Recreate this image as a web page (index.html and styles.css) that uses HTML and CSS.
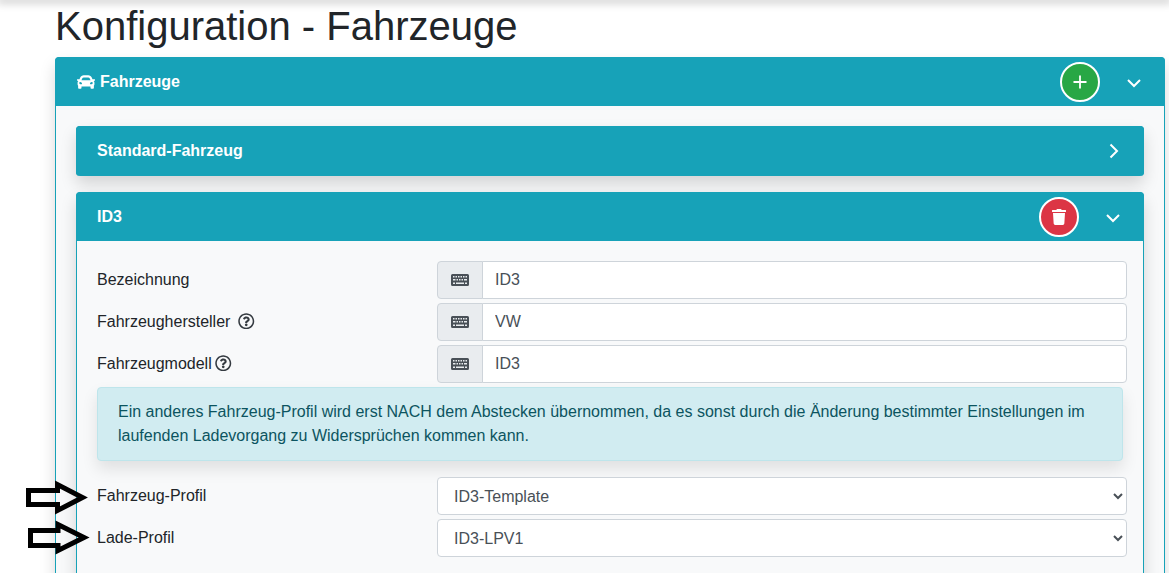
FILE: index.html
```html
<!DOCTYPE html>
<html lang="de">
<head>
<meta charset="utf-8">
<title>Konfiguration - Fahrzeuge</title>
<link rel="stylesheet" href="styles.css">
</head>
<body>
<div class="topshadow"></div>
<main class="page">
  <h1 class="title">Konfiguration - Fahrzeuge</h1>
  <section class="card outer">
    <header class="card-head">
      <div class="head-title">
        <svg class="car" viewBox="0 0 512 512"><path fill="currentColor" d="M499.99 176h-59.87l-16.64-41.6C406.38 91.63 365.57 64 319.5 64h-127c-46.06 0-86.88 27.63-103.99 70.4L71.87 176H12.01C4.2 176-1.53 183.34.37 190.91l6 24C7.7 220.25 12.5 224 18.01 224h20.07C24.65 235.73 16 252.78 16 272v48c0 16.12 6.16 30.67 16 41.93V416c0 17.67 14.33 32 32 32h32c17.67 0 32-14.33 32-32v-32h256v32c0 17.67 14.33 32 32 32h32c17.67 0 32-14.33 32-32v-54.07c9.84-11.25 16-25.8 16-41.93v-48c0-19.22-8.65-36.27-22.07-48H494c5.51 0 10.31-3.75 11.64-9.09l6-24c1.89-7.57-3.84-14.91-11.65-14.91zm-352.06-17.83c7.29-18.22 24.94-30.17 44.57-30.17h127c19.63 0 37.28 11.95 44.57 30.17L384 208H128l19.93-49.83zM96 319.8c-19.2 0-32-12.76-32-31.9S76.8 256 96 256s48 28.71 48 47.85-28.8 15.95-48 15.95zm320 0c-19.2 0-48 3.19-48-15.95S396.8 256 416 256s32 12.76 32 31.9-12.8 31.9-32 31.9z"/></svg>
        <span>Fahrzeuge</span>
      </div>
      <div class="head-actions">
        <span class="round green">
          <svg class="plus" viewBox="0 0 14 14"><path d="M7 .5v13M.5 7h13"/></svg>
        </span>
        <svg class="chev" viewBox="0 0 14 9"><path d="M1 1l6 6 6-6"/></svg>
      </div>
    </header>
    <div class="outer-body">
      <section class="card inner collapsed">
        <header class="card-head head-sub">
          <div class="head-title">Standard-Fahrzeug</div>
          <svg class="chev-right" viewBox="0 0 10 16"><path d="M1.500 1.500 8 8l-6.500 6.500"/></svg>
        </header>
      </section>
      <section class="card inner">
        <header class="card-head head-sub">
          <div class="head-title">ID3</div>
          <div class="head-actions">
            <span class="round red">
              <svg class="trash" viewBox="0 0 448 512"><path fill="currentColor" d="M432 32H312l-9.400-18.700A24 24 0 0 0 281.100 0H166.800a23.720 23.720 0 0 0-21.400 13.300L136 32H16A16 16 0 0 0 0 48v32a16 16 0 0 0 16 16h416a16 16 0 0 0 16-16V48a16 16 0 0 0-16-16zM53.200 467a48 48 0 0 0 47.900 45h245.800a48 48 0 0 0 47.900-45L416 128H32z"/></svg>
            </span>
            <svg class="chev" viewBox="0 0 14 9"><path d="M1 1l6 6 6-6"/></svg>
          </div>
        </header>
        <div class="inner-body">
          <div class="row">
            <label class="lbl">Bezeichnung</label>
            <div class="group">
              <span class="addon"><svg class="kbd" viewBox="0 0 18 12"><use href="#kbd"/></svg></span>
              <input class="field" type="text" value="ID3">
            </div>
          </div>
          <div class="row">
            <label class="lbl">Fahrzeughersteller <svg class="help" viewBox="0 0 512 512"><use href="#help"/></svg></label>
            <div class="group">
              <span class="addon"><svg class="kbd" viewBox="0 0 18 12"><use href="#kbd"/></svg></span>
              <input class="field" type="text" value="VW">
            </div>
          </div>
          <div class="row">
            <label class="lbl">Fahrzeugmodell<svg class="help" viewBox="0 0 512 512"><use href="#help"/></svg></label>
            <div class="group">
              <span class="addon"><svg class="kbd" viewBox="0 0 18 12"><use href="#kbd"/></svg></span>
              <input class="field" type="text" value="ID3">
            </div>
          </div>
          <div class="alert">Ein anderes Fahrzeug-Profil wird erst NACH dem Abstecken übernommen, da es sonst durch die Änderung bestimmter Einstellungen im laufenden Ladevorgang zu Widersprüchen kommen kann.</div>
          <div class="row">
            <label class="lbl">Fahrzeug-Profil</label>
            <select class="field pick"><option>ID3-Template</option></select>
          </div>
          <div class="row">
            <label class="lbl">Lade-Profil</label>
            <select class="field pick"><option>ID3-LPV1</option></select>
          </div>
        </div>
      </section>
    </div>
  </section>
  <svg class="arrow arrow-one" viewBox="0 0 64 36"><path d="M2.500 10.500H31.500V4.500L56.500 17.500 31.500 30.500V24.500H2.500z"/></svg>
  <svg class="arrow arrow-two" viewBox="0 0 64 36"><path d="M2.500 10.500H30V4.500L56 17.500 30 30.500V25.500H2.500z"/></svg>
</main>
<svg class="defs" width="0" height="0">
  <defs>
    <g id="kbd">
      <path fill="#495057" fill-rule="evenodd" d="M1.500 0h15A1.500 1.500 0 0 1 18 1.500v9a1.500 1.500 0 0 1-1.500 1.500h-15A1.500 1.500 0 0 1 0 10.500v-9A1.500 1.500 0 0 1 1.500 0zM2 2v1.500h1.500V2zm2.500 0v1.500H6V2zM7 2v1.500h1.500V2zm2.500 0v1.500H11V2zM12 2v1.500h1.500V2zm2.500 0v1.500H16V2zM2 5v1.500h2.500V5zm3.500 0v1.500H7V5zM8 5v1.500h1.500V5zm2.500 0v1.500H12V5zM13 5v1.500h3V5zM2 8.500V10h2V8.500zm3 0V10h8V8.500zm9 0V10h2V8.500z"/>
    </g>
    <g id="help">
      <path fill="#343a40" d="M256 8C119.043 8 8 119.083 8 256c0 136.997 111.043 248 248 248s248-111.003 248-248C504 119.083 392.957 8 256 8zm0 448c-110.532 0-200-89.431-200-200 0-110.495 89.472-200 200-200 110.491 0 200 89.471 200 200 0 110.530-89.431 200-200 200zm107.244-255.200c0 67.052-72.421 68.084-72.421 92.863V300c0 6.627-5.373 12-12 12h-45.647c-6.627 0-12-5.373-12-12v-8.659c0-35.745 27.100-50.034 47.579-61.516 17.561-9.845 28.324-16.541 28.324-29.579 0-17.246-21.999-28.693-39.784-28.693-23.189 0-33.894 10.977-48.942 29.969-4.057 5.120-11.460 6.071-16.666 2.124l-27.824-21.098c-5.107-3.872-6.251-11.066-2.644-16.363C184.846 131.491 214.940 112 261.794 112c49.071 0 101.450 38.304 101.450 88.800zM298 368c0 23.159-18.841 42-42 42s-42-18.841-42-42 18.841-42 42-42 42 18.841 42 42z"/>
    </g>
  </defs>
</svg>
</body>
</html>
```
FILE: styles.css
```css
* { box-sizing: border-box; }
html, body {
  margin: 0;
  height: 573px;
  overflow: hidden;
  background: #fff;
  font-family: "Liberation Sans", Arial, sans-serif;
  font-size: 16px;
  line-height: 24px;
  color: #212529;
}
.topshadow {
  height: 0;
  box-shadow: 0 0 8px 3px rgba(0, 0, 0, .22);
}
.page {
  position: relative;
  padding: 2px 4px 0 55px;
}
.title {
  margin: 0 0 7px;
  font-size: 40px;
  line-height: 48px;
  font-weight: 400;
}
.card {
  border: 1px solid #17a2b8;
  border-radius: 4px;
  box-shadow: 0 8px 16px rgba(0, 0, 0, .15);
  background: #f8f9fa;
}
.card-head {
  display: flex;
  align-items: center;
  justify-content: space-between;
  box-sizing: content-box;
  height: 49px;
  margin: -1px -1px 0;
  padding: 0 24px 0 22px;
  background: #17a2b8;
  color: #fff;
  border-radius: 4px 4px 0 0;
}
.head-sub { padding: 0 24px 0 21px; }
.head-title {
  display: flex;
  align-items: center;
  gap: 5px;
  font-weight: 700;
}
.car { width: 18px; height: 18px; }
.head-actions {
  display: flex;
  align-items: center;
  gap: 27px;
}
.round {
  display: flex;
  align-items: center;
  justify-content: center;
  width: 40px;
  height: 40px;
  border: 2px solid #fff;
  border-radius: 50%;
}
.green { background: #28a745; }
.red { background: #dc3545; }
.plus { width: 14px; height: 14px; fill: none; stroke: #fff; stroke-width: 1.800; }
.trash { width: 14px; height: 16px; }
.chev { width: 14px; height: 9px; margin-top: 3px; fill: none; stroke: #fff; stroke-width: 2; }
.chev-right { width: 10px; height: 16px; margin-right: 1px; fill: none; stroke: #fff; stroke-width: 2; }
.outer-body { padding: 20px; }
.inner { margin-bottom: 16px; }
.collapsed { border-bottom: 0; height: 50px; border-radius: 4px; }
.collapsed .card-head { height: 50px; border-radius: 4px; }
.inner-body { padding: 20px; }
.row {
  display: grid;
  grid-template-columns: 340px 1fr;
  margin: 0 -4px 4px 0;
}
.lbl {
  display: block;
  padding-top: 7px;
}
.help { width: 16.500px; height: 16.500px; vertical-align: -2px; margin-left: 3.500px; }
.group { display: flex; }
.addon {
  display: flex;
  align-items: center;
  justify-content: center;
  flex: none;
  width: 46px;
  height: 38px;
  background: #e9ecef;
  border: 1px solid #ced4da;
  border-radius: 4px 0 0 4px;
}
.kbd { width: 18px; height: 12px; }
.field {
  flex: 1;
  min-width: 0;
  height: 38px;
  padding: 6px 12px;
  background: #fff;
  border: 1px solid #ced4da;
  border-radius: 0 4px 4px 0;
  margin-left: -1px;
  font: 400 16px/24px "Liberation Sans", Arial, sans-serif;
  color: #495057;
}
.pick {
  width: 100%;
  margin-left: 0;
  border-radius: 4px;
}
.alert {
  margin: 0 0 16px;
  padding: 12px 20px;
  background: #d1ecf1;
  border: 1px solid #bee5eb;
  border-radius: 4px;
  color: #0c5460;
  box-shadow: 0 8px 16px rgba(0, 0, 0, .1);
}
.arrow {
  position: absolute;
  width: 64px;
  height: 36px;
  fill: none;
  stroke: #000;
  stroke-width: 5;
  stroke-linejoin: miter;
  overflow: visible;
}
.arrow-one { left: 26px; top: 480px; }
.arrow-two { left: 28px; top: 520px; }
.defs { position: absolute; }
```
